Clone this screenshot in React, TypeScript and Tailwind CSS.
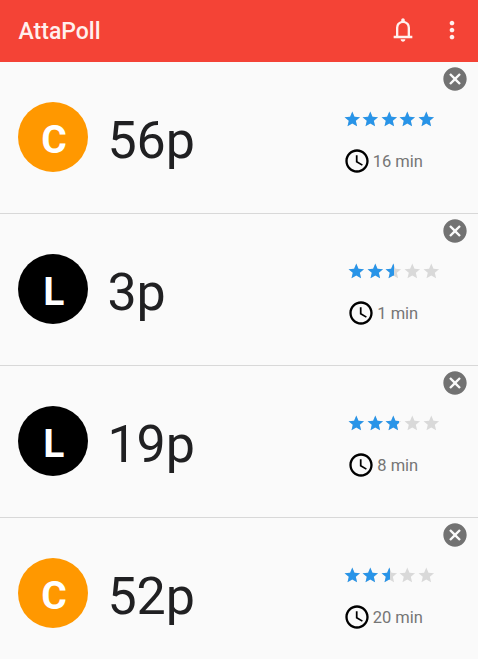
import { MdCancel, MdMoreVert, MdSchedule, MdStar } from "react-icons/md";

type Survey = {
  id: number;
  provider: string;
  color: string;
  reward: string;
  rating: number;
  time: string;
};

const surveys: Survey[] = [
  { id: 1, provider: "C", color: "bg-[#ff9800]", reward: "56p", rating: 5, time: "16 min" },
  { id: 2, provider: "L", color: "bg-black", reward: "3p", rating: 2.53, time: "1 min" },
  { id: 3, provider: "L", color: "bg-black", reward: "19p", rating: 2.78, time: "8 min" },
  { id: 4, provider: "C", color: "bg-[#ff9800]", reward: "52p", rating: 2.55, time: "20 min" },
];

function BellIcon() {
  return (
    <svg viewBox="0 0 24 24" className="size-7" fill="currentColor">
      <path d="M4 19v-2h2v-7q0-2.075 1.25-3.688T10.5 4.2v-.7q0-.625.438-1.062T12 2t1.063.438T13.5 3.5v.7q2 .5 3.25 2.113T18 10v7h2v2zm8 3q-.825 0-1.412-.587T10 20h4q0 .825-.587 1.413T12 22m-4-5h8v-7q0-1.65-1.175-2.825T12 6T9.175 7.175T8 10z" />
    </svg>
  );
}

function Star({ fill }: { fill: number }) {
  return (
    <div className="relative size-[18.6px] shrink-0">
      <MdStar className="size-full text-[#d9d9d9]" />
      {fill > 0 && (
        <div className="absolute inset-y-0 left-0 overflow-hidden" style={{ width: `${fill * 100}%` }}>
          <MdStar className="size-[18.6px] text-[#2894e8]" />
        </div>
      )}
    </div>
  );
}

function SurveyRow({ survey }: { survey: Survey }) {
  return (
    <div className="relative flex h-38 items-center border-b border-[#d8d8d8] pl-[18.4px]">
      <div className={`mb-px flex size-[70px] items-center justify-center rounded-full text-[39px] leading-none font-bold text-white ${survey.color}`}>
        <span className="pt-[6px] pl-px">{survey.provider}</span>
      </div>
      <span className="ml-[19px] pt-[6px] text-[52px] leading-none text-[#202022]">{survey.reward}</span>
      <div className="ml-auto flex w-[190.5px] justify-center pt-[9.5px]">
        <div className="flex flex-col gap-[18.5px]">
          {/* stars start at the clock's left edge and may run past the time */}
          <div className="flex w-0">
            {[0, 1, 2, 3, 4].map((i) => (
              <Star key={i} fill={Math.max(0, Math.min(1, survey.rating - i))} />
            ))}
          </div>
          <div className="flex items-center gap-[2px]">
            <MdSchedule className="size-7 text-black" />
            <span className="pt-[2px] text-[16.5px] leading-5 text-[#757575]">{survey.time}</span>
          </div>
        </div>
      </div>
      <button className="absolute top-[3px] right-[9.5px]" aria-label="Dismiss">
        <MdCancel className="size-7 text-[#727272]" />
      </button>
    </div>
  );
}

export default function App() {
  return (
    <div className="h-[659px] w-[478px] overflow-hidden bg-[#fafafa] font-[Roboto,sans-serif]">
      <header className="flex h-[62px] items-center bg-[#f44336] pr-3 pb-0.5 pl-[18.5px] text-[#fff0ee]">
        <h1 className="pt-[3px] text-[23px] leading-7 font-medium">AttaPoll</h1>
        <div className="ml-auto flex items-center gap-[21px]">
          <BellIcon />
          <MdMoreVert className="size-7" />
        </div>
      </header>
      <main>
        {surveys.map((s) => (
          <SurveyRow key={s.id} survey={s} />
        ))}
      </main>
    </div>
  );
}
